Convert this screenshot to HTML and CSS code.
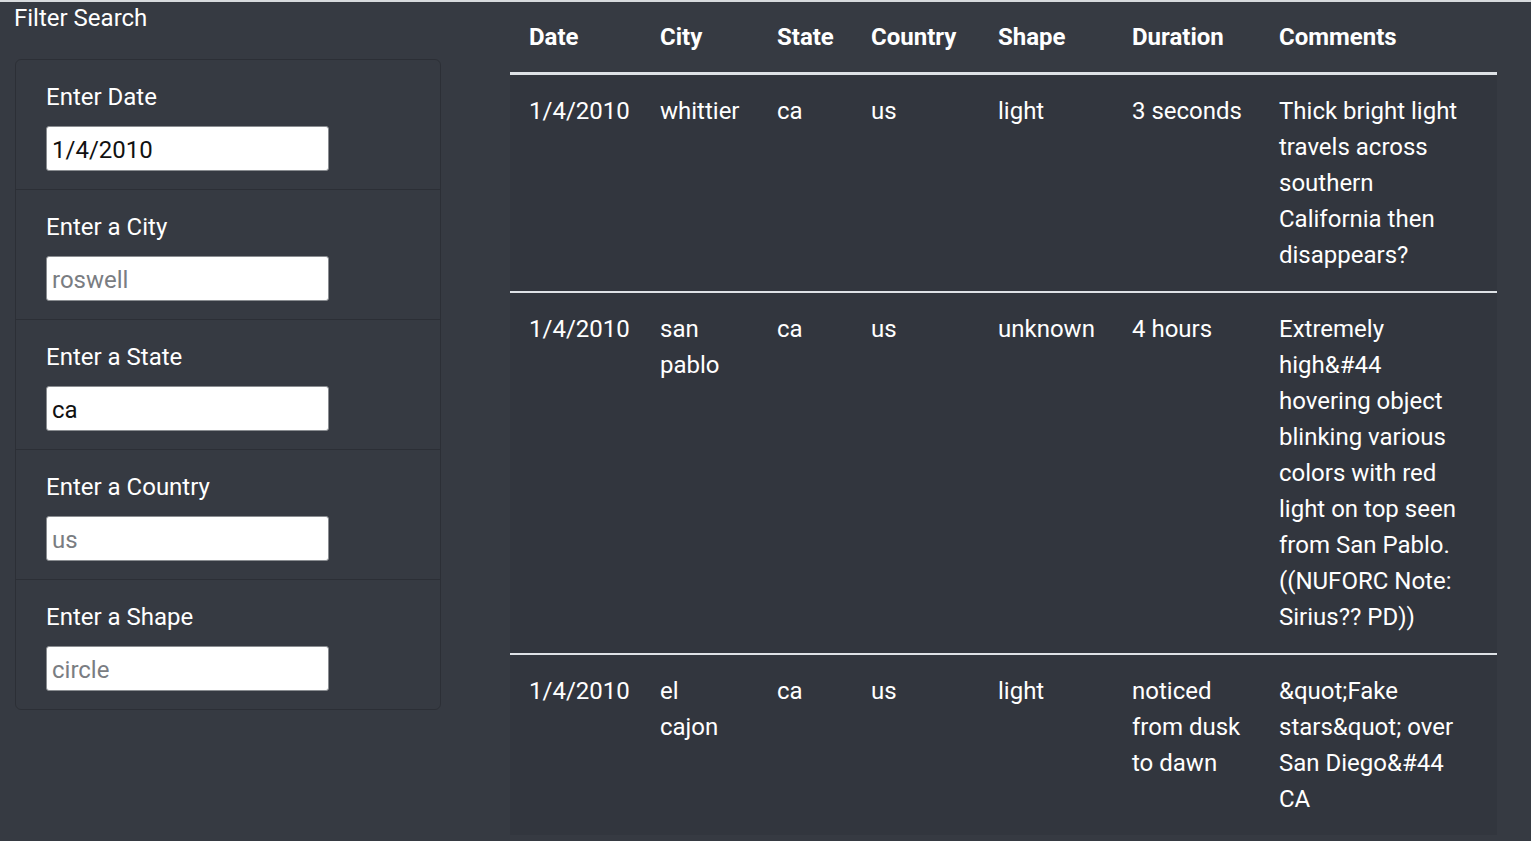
FILE: index.html
```html
<!DOCTYPE html>
<html lang="en">
<head>
<meta charset="utf-8">
<title>UFO Sightings</title>
<link rel="stylesheet" href="styles.css">
</head>
<body>
<div class="page">
  <aside class="sidebar">
    <h5 class="sidebar-title">Filter Search</h5>
    <ul class="filters">
      <li class="filter">
        <label class="filter-label" for="datetime">Enter Date</label>
        <input class="filter-input" id="datetime" type="text" value="1/4/2010">
      </li>
      <li class="filter">
        <label class="filter-label" for="city">Enter a City</label>
        <input class="filter-input" id="city" type="text" placeholder="roswell">
      </li>
      <li class="filter">
        <label class="filter-label" for="state">Enter a State</label>
        <input class="filter-input" id="state" type="text" value="ca">
      </li>
      <li class="filter">
        <label class="filter-label" for="country">Enter a Country</label>
        <input class="filter-input" id="country" type="text" placeholder="us">
      </li>
      <li class="filter">
        <label class="filter-label" for="shape">Enter a Shape</label>
        <input class="filter-input" id="shape" type="text" placeholder="circle">
      </li>
    </ul>
  </aside>
  <main class="results">
    <table class="ufo-table">
      <colgroup>
        <col class="c-date"><col class="c-city"><col class="c-state"><col class="c-country"><col class="c-shape"><col class="c-duration"><col class="c-comments">
      </colgroup>
      <thead>
        <tr>
          <th>Date</th><th>City</th><th>State</th><th>Country</th><th>Shape</th><th>Duration</th><th>Comments</th>
        </tr>
      </thead>
      <tbody>
        <tr>
          <td>1/4/2010</td><td>whittier</td><td>ca</td><td>us</td><td>light</td><td>3 seconds</td>
          <td class="comment">Thick bright light travels across southern California then disappears?</td>
        </tr>
        <tr>
          <td>1/4/2010</td><td>san pablo</td><td>ca</td><td>us</td><td>unknown</td><td>4 hours</td>
          <td class="comment">Extremely high&amp;#44 hovering object blinking various colors with red light on top seen from San Pablo. ((NUFORC Note: Sirius?? PD))</td>
        </tr>
        <tr>
          <td>1/4/2010</td><td>el cajon</td><td>ca</td><td>us</td><td>light</td><td>noticed from dusk to dawn</td>
          <td class="comment">&amp;quot;Fake stars&amp;quot; over San Diego&amp;#44 CA</td>
        </tr>
      </tbody>
    </table>
  </main>
</div>
</body>
</html>
```
FILE: styles.css
```css
html, body {
  margin: 0;
  padding: 0;
}
body {
  background: #363a42;
  border-top: 2px solid #d7dadd;
  color: #ffffff;
  font-family: Roboto, "Noto Sans", sans-serif;
  font-size: 24px;
  line-height: 36px;
  min-height: 839px;
}
.page {
  display: grid;
  grid-template-columns: 456px 987px;
  column-gap: 54px;
  align-items: start;
}
.sidebar {
  padding: 0 15px;
}
.sidebar-title {
  margin: 0 0 21px -1px;
  font-size: 24px;
  font-weight: 400;
  line-height: 36px;
  height: 36px;
  position: relative;
  top: -2px;
}
.filters {
  list-style: none;
  margin: 0;
  padding: 0;
  border: 1px solid rgba(0, 0, 0, 0.18);
  border-radius: 6px;
}
.filter {
  padding: 19px 30px 18px;
  display: flex;
  flex-direction: column;
  align-items: flex-start;
}
.filter + .filter {
  border-top: 1px solid rgba(0, 0, 0, 0.18);
}
.filter-label {
  display: block;
  margin-bottom: 11px;
  line-height: 36px;
}
.filter-input {
  box-sizing: border-box;
  width: 283px;
  height: 45px;
  margin: 0;
  padding: 2px 5px 0;
  border: 1.5px solid #8a8d91;
  border-radius: 3px;
  background: #ffffff;
  color: #111111;
  font-family: Roboto, "Noto Sans", sans-serif;
  font-size: 24px;
}
.filter-input::placeholder {
  color: #7a7d82;
  opacity: 1;
}
.results {
  padding: 0;
}
.ufo-table {
  width: 987px;
  table-layout: fixed;
  border-collapse: collapse;
  color: #ffffff;
}
.c-date { width: 131px; }
.c-city { width: 117px; }
.c-state { width: 94px; }
.c-country { width: 127px; }
.c-shape { width: 134px; }
.c-duration { width: 147px; }
.c-comments { width: 237px; }
.ufo-table th {
  text-align: left;
  font-weight: 700;
  padding: 17px 18px 17px 19px;
  vertical-align: bottom;
  border-bottom: 3px solid #dee2e6;
}
.ufo-table tbody {
  background: #32363e;
}
.ufo-table td {
  padding: 18px 18px 18px 19px;
  vertical-align: top;
}
.ufo-table td.comment {
  padding-right: 28px;
}
.ufo-table tbody tr + tr td {
  border-top: 2px solid #dee2e6;
}
```
